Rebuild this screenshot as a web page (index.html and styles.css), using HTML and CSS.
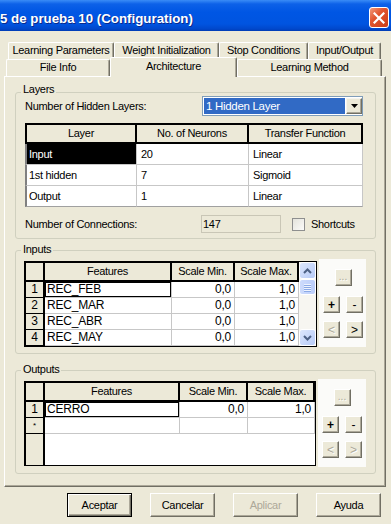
FILE: index.html
```html
<!DOCTYPE html>
<html lang="es">
  <head>
    <meta charset="UTF-8" />
    <meta name="viewport" content="width=device-width, initial-scale=1.0" />
    <title>Configuration</title>
    <link rel="stylesheet" href="styles.css">
  </head>
  <body>
    <div class="window">
      <div class="titlebar">
        <span class="title">5 de prueba 10 (Configuration)</span>
        <span class="close-btn">
          <svg width="12" height="12" viewBox="0 0 12 12">
            <path d="M1.5 1.5 L10.5 10.5 M10.5 1.5 L1.5 10.5" stroke="#fff" stroke-width="2.2" stroke-linecap="square" fill="none" />
          </svg>
        </span>
      </div>

      <div class="tabs">
        <div class="tab-row back">
          <div class="tab w-lp">Learning Parameters</div>
          <div class="tab w-wi">Weight Initialization</div>
          <div class="tab w-sc">Stop Conditions</div>
          <div class="tab w-io">Input/Output</div>
        </div>
        <div class="tab-row front">
          <div class="tab w-fi">File Info</div>
          <div class="tab w-ar selected">Architecture</div>
          <div class="tab w-lm">Learning Method</div>
        </div>
      </div>

      <div class="page">
        <!-- Layers -->
        <div class="group layers">
          <div class="legend">Layers</div>
          <div class="hidden-row">
            <span class="label">Number of Hidden Layers:</span>
            <div class="combo">
              <span class="combo-value">1 Hidden Layer</span>
              <span class="combo-btn">
                <svg width="7" height="4" viewBox="0 0 7 4"><path d="M0 0h7L3.5 4z" fill="#000" /></svg>
              </span>
            </div>
          </div>

          <div class="layer-grid">
            <div class="lh first">Layer</div>
            <div class="lh">No. of Neurons</div>
            <div class="lh">Transfer Function</div>

            <div class="lc first sel">Input</div>
            <div class="lc">20</div>
            <div class="lc">Linear</div>

            <div class="lc first">1st hidden</div>
            <div class="lc">7</div>
            <div class="lc">Sigmoid</div>

            <div class="lc first last">Output</div>
            <div class="lc last">1</div>
            <div class="lc last">Linear</div>
          </div>

          <div class="conn-row">
            <span class="label conn-label">Number of Connections:</span>
            <span class="readonly">147</span>
            <span class="checkbox"></span>
            <span class="check-label">Shortcuts</span>
          </div>
        </div>

        <!-- Inputs -->
        <div class="group inputs">
          <div class="legend">Inputs</div>
          <div class="grid-row">
            <div class="data-grid">
              <div class="cells in-cols">
                <div class="hc corner"></div>
                <div class="hc">Features</div>
                <div class="hc">Scale Min.</div>
                <div class="hc">Scale Max.</div>

                <div class="rh">1</div>
                <div class="dc focus">REC_FEB</div>
                <div class="dc num">0,0</div>
                <div class="dc num">1,0</div>

                <div class="rh">2</div>
                <div class="dc">REC_MAR</div>
                <div class="dc num">0,0</div>
                <div class="dc num">1,0</div>

                <div class="rh">3</div>
                <div class="dc">REC_ABR</div>
                <div class="dc num">0,0</div>
                <div class="dc num">1,0</div>

                <div class="rh">4</div>
                <div class="dc">REC_MAY</div>
                <div class="dc num">0,0</div>
                <div class="dc num">1,0</div>
              </div>
              <div class="scrollbar">
                <span class="sb-btn">
                  <svg width="9" height="6" viewBox="0 0 9 6"><path d="M1 5 L4.5 1.5 L8 5" stroke="#4d6185" stroke-width="2" fill="none" /></svg>
                </span>
                <span class="sb-thumb"><i></i><i></i><i></i><i></i></span>
                <span class="sb-track"></span>
                <span class="sb-btn">
                  <svg width="9" height="6" viewBox="0 0 9 6"><path d="M1 1 L4.5 4.5 L8 1" stroke="#4d6185" stroke-width="2" fill="none" /></svg>
                </span>
              </div>
            </div>
            <div class="side">
              <span class="mb more off">...</span>
              <span class="mb bold">+</span>
              <span class="mb">-</span>
              <span class="mb off">&lt;</span>
              <span class="mb">&gt;</span>
            </div>
          </div>
        </div>

        <!-- Outputs -->
        <div class="group outputs">
          <div class="legend">Outputs</div>
          <div class="grid-row">
            <div class="data-grid">
              <div class="cells out-cols">
                <div class="hc corner"></div>
                <div class="hc">Features</div>
                <div class="hc">Scale Min.</div>
                <div class="hc">Scale Max.</div>

                <div class="rh">1</div>
                <div class="dc focus">CERRO</div>
                <div class="dc num">0,0</div>
                <div class="dc num">1,0</div>

                <div class="rh star">*</div>
                <div class="dc"></div>
                <div class="dc"></div>
                <div class="dc"></div>

                <div class="rh filler"></div>
                <div class="blank"></div>
              </div>
            </div>
            <div class="side">
              <span class="mb more off">...</span>
              <span class="mb bold">+</span>
              <span class="mb">-</span>
              <span class="mb off">&lt;</span>
              <span class="mb off">&gt;</span>
            </div>
          </div>
        </div>
      </div>

      <div class="dialog-buttons">
        <span class="btn default">Aceptar</span>
        <span class="btn">Cancelar</span>
        <span class="btn off">Aplicar</span>
        <span class="btn">Ayuda</span>
      </div>
    </div>
  </body>
</html>
```

FILE: styles.css
```css
* {
  box-sizing: border-box;
}

body {
  margin: 0;
  width: 391px;
  height: 524px;
  overflow: hidden;
  background-color: #ece9d8;
  font-family: "Liberation Sans", Arial, sans-serif;
  font-size: 11px;
  letter-spacing: -0.3px;
  color: #000;
}

.window {
  width: 391px;
  height: 524px;
  display: flex;
  flex-direction: column;
}

/* title bar */
.titlebar {
  height: 31px;
  flex: none;
  display: flex;
  justify-content: space-between;
  align-items: flex-start;
  background: linear-gradient(#3a8cf6 0px, #0d61e8 4px, #0056e4 12px, #0054e0 24px, #0047cb 29px, #003cb4 31px);
}

.title {
  padding-top: 11px;
  line-height: 16px;
  font-size: 13.3px;
  font-weight: bold;
  letter-spacing: 0;
  color: #fff;
  text-shadow: 1px 1px 0 #0a2a8c;
  white-space: nowrap;
}

.close-btn {
  width: 20px;
  height: 21px;
  margin: 7px 2px 0 0;
  border: 1px solid #fff;
  border-radius: 3px;
  background: linear-gradient(135deg, #f19a7c 0%, #e1552f 40%, #cc3d16 100%);
  display: flex;
  align-items: center;
  justify-content: center;
}

/* tabs */
.tabs {
  margin-top: 11px;
  flex: none;
}

.tab-row {
  display: flex;
  height: 17px;
}

.tab-row.back {
  padding-left: 8px;
}

.tab-row.front {
  padding-left: 6px;
}

.tab {
  height: 17px;
  text-align: center;
  line-height: 15px;
  white-space: nowrap;
  background-color: #ece9d8;
  border-top: 1px solid #fff;
  border-left: 1px solid #fff;
  border-right: 1px solid #716f64;
  border-radius: 2px 2px 0 0;
  box-shadow: inset -1px 0 0 #aca899;
}

.tab.selected {
  position: relative;
  z-index: 1;
  height: 20px;
  margin-top: -2px;
  line-height: 16px;
}

.w-lp { width: 106px; }
.w-wi { width: 105px; }
.w-sc { width: 89px; }
.w-io { width: 73px; }
.w-fi { width: 104px; }
.w-ar { width: 127px; }
.w-lm { width: 145px; }

/* tab page */
.page {
  flex: none;
  width: 382px;
  height: 411px;
  margin-left: 4px;
  padding: 0 9px 0 10px;
  border: 1px solid;
  border-color: #fff #716f64 #716f64 #fff;
  box-shadow: inset -1px -1px 0 #aca899;
}

.group {
  display: flex;
  flex-direction: column;
  padding: 0 9px;
  border: 1px solid #d0d0bf;
  border-radius: 3px;
}

.legend {
  align-self: flex-start;
  margin: -10px 0 0 -4px;
  padding: 0 2px;
  line-height: 13px;
  background-color: #ece9d8;
}

.layers {
  margin-top: 15px;
  height: 147px;
}

.inputs {
  margin-top: 11px;
  height: 104px;
}

.inputs .legend {
  margin-top: -8px;
}

.outputs {
  margin-top: 16px;
  height: 104px;
}

.outputs .legend {
  margin-top: -8px;
}

/* layers group */
.hidden-row {
  display: flex;
  align-items: center;
  height: 20px;
}

.label {
  width: 177px;
  flex: none;
  white-space: nowrap;
}

.combo {
  width: 161px;
  height: 20px;
  display: flex;
  padding: 1px 0 1px 1px;
  border: 1px solid #7f9db9;
  background-color: #fff;
}

.combo-value {
  width: 141px;
  line-height: 16px;
  padding-left: 2px;
  font-size: 11.5px;
  background-color: #316ac5;
  color: #fff;
}

.combo-btn {
  width: 16px;
  margin-left: 1px;
  display: flex;
  align-items: center;
  justify-content: center;
  background-color: #ece9d8;
  border: 1px solid;
  border-color: #f5f4ee #716f64 #716f64 #f5f4ee;
  box-shadow: inset -1px -1px 0 #aca899;
}

.layer-grid {
  margin-top: 7px;
  width: 338px;
  display: grid;
  grid-template-columns: 112px 112px 114px;
  grid-template-rows: 21px 21px 21px 21px;
}

.lh {
  text-align: center;
  line-height: 17px;
  background-color: #ece9d8;
  border-top: 2px solid #000;
  border-right: 2px solid #000;
  border-bottom: 2px solid #000;
}

.lh.first {
  border-left: 2px solid #000;
}

.lc {
  padding-left: 4px;
  line-height: 20px;
  background-color: #fff;
  border-right: 1px solid #c7c7c7;
  border-bottom: 1px solid #c7c7c7;
  white-space: nowrap;
}

.lc.first {
  padding-left: 2px;
  border-left: 2px solid #808080;
}

.lc.last {
  border-bottom-color: #a0a0a0;
}

.lc.sel {
  background-color: #000;
  color: #fff;
}

.conn-row {
  display: flex;
  align-items: center;
  height: 18px;
  margin-top: 8px;
}

.conn-label {
  width: 176px;
}

.readonly {
  width: 80px;
  height: 18px;
  line-height: 16px;
  padding-left: 1px;
  border: 1px solid #c9c6b6;
  background-color: #ece9d8;
}

.checkbox {
  width: 13px;
  height: 13px;
  margin-left: 11px;
  border: 1px solid #8e8f8f;
  background: linear-gradient(135deg, #e4e3dc, #fbfbf9);
}

.check-label {
  margin-left: 6px;
}

/* data grids */
.grid-row {
  display: flex;
  align-items: flex-start;
  margin-top: 5px;
}

.data-grid {
  width: 293px;
  margin-left: -1px;
  display: flex;
  border: 1px solid #000;
  background-color: #fff;
}

.cells {
  display: grid;
  grid-template-rows: 20px;
  grid-auto-rows: 16px;
  align-content: start;
}

.in-cols {
  grid-template-columns: 20px 127px 63px 64px;
}

.out-cols {
  grid-template-columns: 20px 135px 68px 67px;
  grid-template-rows: 20px 16px 16px 31px;
}

.hc {
  text-align: center;
  line-height: 17px;
  white-space: nowrap;
  overflow: hidden;
  background-color: #ece9d8;
  border-top: 1px solid #000;
  border-right: 2px solid #000;
  border-bottom: 2px solid #000;
}

.hc.corner {
  border-left: 1px solid #000;
}

.rh {
  text-align: center;
  line-height: 15px;
  font-size: 12px;
  background-color: #ece9d8;
  border-left: 1px solid #000;
  border-right: 2px solid #000;
  border-bottom: 1px solid #000;
}

.rh.star {
  font-size: 8px;
}

.rh.filler {
  border-bottom: none;
}

.blank {
  grid-column: 2 / 5;
}

.dc {
  padding: 0 3px 0 2px;
  line-height: 15px;
  font-size: 12px;
  letter-spacing: -0.2px;
  white-space: nowrap;
  overflow: hidden;
  border-right: 1px solid #c7c7c7;
  border-bottom: 1px solid #c7c7c7;
}

.dc.num {
  text-align: right;
}

.dc.focus {
  box-shadow: inset 0 0 0 1px #000;
}

.scrollbar {
  width: 17px;
  height: 84px;
  display: flex;
  flex-direction: column;
  background-color: #f7f6f1;
}

.sb-btn {
  height: 17px;
  display: flex;
  align-items: center;
  justify-content: center;
  border: 1px solid #fff;
  border-radius: 3px;
  background: linear-gradient(135deg, #dde7fd, #b7cbf7);
}

.sb-thumb {
  height: 16px;
  display: flex;
  flex-direction: column;
  align-items: center;
  justify-content: center;
  gap: 1px;
  border: 1px solid #fff;
  border-radius: 3px;
  background: linear-gradient(90deg, #cddbfc, #bccefa);
}

.sb-thumb i {
  width: 7px;
  height: 1px;
  background-color: #eef3fe;
  box-shadow: 0 1px 0 #8caae6;
}

.sb-track {
  flex: 1;
}

/* side buttons */
.side {
  width: 55px;
  height: 88px;
  margin: -2px 0 0 2px;
  padding: 10px 0 0 4px;
  display: grid;
  grid-template-columns: 17px 17px;
  column-gap: 6px;
  row-gap: 8px;
  align-content: start;
  background-color: #fbfbf9;
}

.mb {
  width: 17px;
  height: 17px;
  display: flex;
  align-items: center;
  justify-content: center;
  font-size: 12px;
  letter-spacing: 0;
  background-color: #ece9d8;
  border: 1px solid;
  border-color: #fff #716f64 #716f64 #fff;
  box-shadow: inset -1px -1px 0 #aca899;
}

.mb.more {
  grid-column: 1 / 3;
  justify-self: center;
  margin-bottom: 2px;
  align-items: flex-end;
  padding-bottom: 3px;
  font-size: 10px;
}

.mb.bold {
  font-weight: bold;
}

.mb.off {
  color: #aca899;
  text-shadow: 1px 1px 0 #fff;
}

/* dialog buttons */
.dialog-buttons {
  display: flex;
  justify-content: flex-end;
  gap: 18px;
  margin-top: 6px;
  padding-right: 10px;
}

.btn {
  width: 65px;
  height: 24px;
  display: flex;
  align-items: center;
  justify-content: center;
  background-color: #ece9d8;
  border: 1px solid;
  border-color: #fff #716f64 #716f64 #fff;
  box-shadow: inset -1px -1px 0 #aca899;
}

.btn.default {
  border: 1px solid #000;
  box-shadow: inset 1px 1px 0 #fff, inset -1px -1px 0 #716f64, inset -2px -2px 0 #aca899;
}

.btn.off {
  color: #aca899;
}
```
